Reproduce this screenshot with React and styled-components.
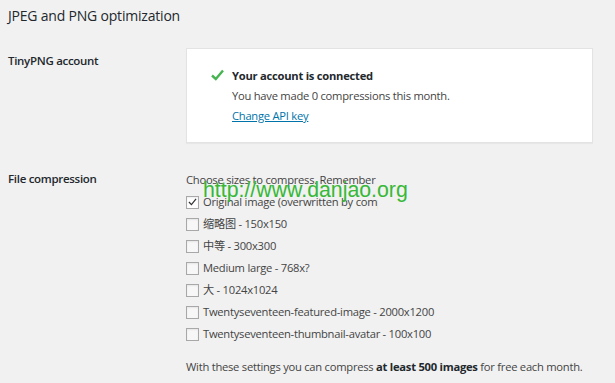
import React from "react";
import styled, { createGlobalStyle } from "styled-components";

const Global = createGlobalStyle`
  html, body { margin: 0; padding: 0; background: #f1f1f1; }
  body { font-family: "Open Sans", "Noto Sans CJK SC", sans-serif; color: #23282d; }
`;

const Page = styled.div`
  position: relative;
  width: 615px;
  height: 383px;
  overflow: hidden;
  padding: 6px 0 0 8px;
  box-sizing: border-box;
`;

const Title = styled.h2`
  margin: 0;
  font-size: 14px;
  letter-spacing: -0.2px;
  font-weight: 400;
  line-height: 20px;
  color: #23282d;
`;

const Row = styled.div`
  display: grid;
  grid-template-columns: 178px 407px;
  margin-top: ${p => p.$top}px;
`;

const Label = styled.div`
  font-size: 11.5px;
  letter-spacing: -0.3px;
  font-weight: 600;
  line-height: 20px;
  color: #23282d;
  padding-top: ${p => p.$pt || 0}px;
`;

const Card = styled.div`
  background: #fff;
  border: 1px solid #e3e3e3;
  box-shadow: 0 1px 1px rgba(0,0,0,0.04);
  height: 95px;
  box-sizing: border-box;
  padding: 17px 0 0 24px;
  display: flex;
  gap: 8px;
`;

const Check = styled.svg`
  width: 13px;
  height: 12px;
  margin-top: 3px;
  flex-shrink: 0;
`;

const Lines = styled.div`
  display: flex;
  flex-direction: column;
  font-size: 11.2px;
  letter-spacing: -0.25px;
  line-height: 20px;
  color: #444;
`;

const Strong = styled.div`
  font-weight: 700;
  color: #23282d;
`;

const Link = styled.a`
  color: #0073aa;
  text-decoration: underline;
`;

const Options = styled.div`
  font-size: 11.2px;
  letter-spacing: -0.25px;
  line-height: 22px;
  color: #444;
`;

const Clip = styled.div`
  width: 192px;
  overflow: hidden;
  white-space: nowrap;
`;

const Option = styled.label`
  display: flex;
  align-items: center;
  gap: 4px;
  white-space: nowrap;
  height: 22px;
`;

const Box = styled.span`
  box-sizing: border-box;
  width: 13px;
  height: 13px;
  border: 1px solid #a8a8a8;
  background: ${p => (p.$on ? "#fff" : "#f7f7f7")};
  display: inline-flex;
  align-items: center;
  justify-content: center;
  flex-shrink: 0;
  box-shadow: inset 0 1px 2px rgba(0,0,0,0.07);
`;

const Note = styled.p`
  margin: 12px 0 0;
  font-size: 11.2px;
  letter-spacing: -0.25px;
  line-height: 20px;
  color: #444;
  white-space: nowrap;
  b { font-weight: 700; color: #23282d; }
`;

const Watermark = styled.div`
  position: absolute;
  left: 203px;
  top: 178px;
  font-family: "Liberation Sans", Arial, sans-serif;
  font-size: 21.3px;
  line-height: 24px;
  color: #38b838;
  pointer-events: none;
`;

const sizes = [
  "缩略图 - 150x150",
  "中等 - 300x300",
  "Medium large - 768x?",
  "大 - 1024x1024",
  "Twentyseventeen-featured-image - 2000x1200",
  "Twentyseventeen-thumbnail-avatar - 100x100",
];

export default function App() {
  return (
    <Page>
      <Global />
      <Title>JPEG and PNG optimization</Title>
      <Row $top={22}>
        <Label $pt={3}>TinyPNG account</Label>
        <Card>
          <Check viewBox="0 0 13 12">
            <path d="M1 6.5 L4.8 10 L12 1.5" fill="none" stroke="#46b450" strokeWidth="2.4" />
          </Check>
          <Lines>
            <Strong>Your account is connected</Strong>
            <div>You have made 0 compressions this month.</div>
            <div><Link href="#">Change API key</Link></div>
          </Lines>
        </Card>
      </Row>
      <Row $top={26}>
        <Label $pt={0}>File compression</Label>
        <Options>
          <Clip>Choose sizes to compress. Remember each selected size counts as a compression.</Clip>
          <Clip>
            <Option>
              <Box $on>
                <svg width="9" height="8" viewBox="0 0 10 9">
                  <path d="M1 4.5 L3.8 7.5 L9 1" fill="none" stroke="#333" strokeWidth="1.4" />
                </svg>
              </Box>
              Original image (overwritten by compressed image)
            </Option>
          </Clip>
          {sizes.map(s => (
            <Option key={s}><Box />{s}</Option>
          ))}
          <Note>With these settings you can compress <b>at least 500 images</b> for free each month.</Note>
        </Options>
      </Row>
      <Watermark>http://www.danjao.org</Watermark>
    </Page>
  );
}
